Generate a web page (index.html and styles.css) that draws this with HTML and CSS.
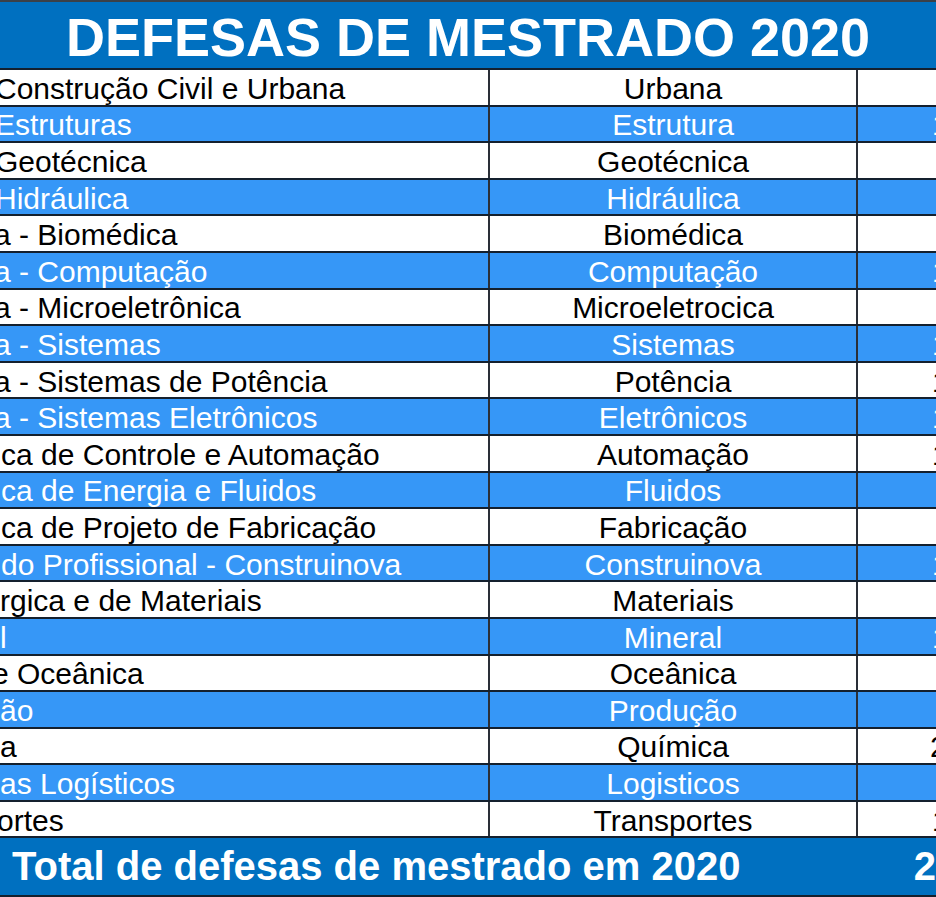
FILE: index.html
```html
<!DOCTYPE html>
<html lang="pt">
<head>
<meta charset="utf-8">
<title>Defesas de Mestrado 2020</title>
<link rel="stylesheet" href="styles.css">
</head>
<body>
<div class="sheet">
  <header class="title-bar"><h1>DEFESAS DE MESTRADO 2020</h1></header>
  <div class="rows">
    <div class="row"><div class="c1 civ">Construção Civil e Urbana</div><div class="c2">Urbana</div><div class="c3"></div></div>
    <div class="row alt"><div class="c1 civ">Estruturas</div><div class="c2">Estrutura</div><div class="c3"><span>1</span></div></div>
    <div class="row"><div class="c1 civ">Geotécnica</div><div class="c2">Geotécnica</div><div class="c3"></div></div>
    <div class="row alt"><div class="c1 civ">Hidráulica</div><div class="c2">Hidráulica</div><div class="c3"></div></div>
    <div class="row"><div class="c1 ele">a - Biomédica</div><div class="c2">Biomédica</div><div class="c3"></div></div>
    <div class="row alt"><div class="c1 ele">a - Computação</div><div class="c2">Computação</div><div class="c3"><span>1</span></div></div>
    <div class="row"><div class="c1 ele">a - Microeletrônica</div><div class="c2">Microeletrocica</div><div class="c3"></div></div>
    <div class="row alt"><div class="c1 ele">a - Sistemas</div><div class="c2">Sistemas</div><div class="c3"><span>1</span></div></div>
    <div class="row"><div class="c1 ele">a - Sistemas de Potência</div><div class="c2">Potência</div><div class="c3"><span>1</span></div></div>
    <div class="row alt"><div class="c1 ele">a - Sistemas Eletrônicos</div><div class="c2">Eletrônicos</div><div class="c3"><span>1</span></div></div>
    <div class="row"><div class="c1 mec">ca de Controle e Automação</div><div class="c2">Automação</div><div class="c3"><span>1</span></div></div>
    <div class="row alt"><div class="c1 mec">ca de Energia e Fluidos</div><div class="c2">Fluidos</div><div class="c3"></div></div>
    <div class="row"><div class="c1 mec">ca de Projeto de Fabricação</div><div class="c2">Fabricação</div><div class="c3"></div></div>
    <div class="row alt"><div class="c1 pro">do Profissional - Construinova</div><div class="c2">Construinova</div><div class="c3"><span>1</span></div></div>
    <div class="row"><div class="c1">rgica e de Materiais</div><div class="c2">Materiais</div><div class="c3"></div></div>
    <div class="row alt"><div class="c1">l</div><div class="c2">Mineral</div><div class="c3"><span>1</span></div></div>
    <div class="row"><div class="c1 oce">e Oceânica</div><div class="c2">Oceânica</div><div class="c3"></div></div>
    <div class="row alt"><div class="c1">ão</div><div class="c2">Produção</div><div class="c3"></div></div>
    <div class="row"><div class="c1">a</div><div class="c2">Química</div><div class="c3"><span class="two">2</span></div></div>
    <div class="row alt"><div class="c1">as Logísticos</div><div class="c2">Logisticos</div><div class="c3"></div></div>
    <div class="row"><div class="c1 ort">ortes</div><div class="c2">Transportes</div><div class="c3"><span>1</span></div></div>
  </div>
  <footer class="total-bar">
    <div class="total-label">Total de defesas de mestrado em 2020</div>
    <div class="total-value">2</div>
  </footer>
</div>
</body>
</html>
```

FILE: styles.css
```css
html, body {
  margin: 0;
  padding: 0;
  overflow: hidden;
  background: #ffffff;
}

.sheet {
  width: 936px;
  height: 897px;
  overflow: hidden;
  font-family: "Liberation Sans", Arial, sans-serif;
  display: flex;
  flex-direction: column;
}

.title-bar {
  height: 70px;
  box-sizing: border-box;
  background: #0070c0;
  border-top: 2px solid #3b4048;
  border-bottom: 2px solid #14202e;
  display: flex;
  align-items: center;
  justify-content: center;
}

.title-bar h1 {
  margin: 0;
  color: #ffffff;
  font-size: 54px;
  font-weight: bold;
  line-height: 1;
  padding-top: 4px;
}

.rows {
  display: grid;
  grid-template-rows: repeat(21, 36.6px);
}

.row {
  display: grid;
  grid-template-columns: 490px 368px 1fr;
  box-sizing: border-box;
  border-bottom: 2px solid #14202e;
  background: #ffffff;
  color: #000000;
  font-size: 30px;
}

.row.alt {
  background: #3697f7;
  color: #ffffff;
}

.row > div {
  display: flex;
  align-items: center;
  white-space: nowrap;
  overflow: hidden;
  line-height: 1;
  padding-top: 3px;
}

.c1 {
  border-right: 2px solid #2a2f38;
}

.c1.civ {
  text-indent: -5px;
}

.c1.oce {
  text-indent: -8px;
}

.c1.ele {
  text-indent: -6px;
}

.c1.mec {
  text-indent: 1px;
}

.c1.pro {
  text-indent: 1px;
}

.c1.ort {
  text-indent: -3px;
}

.c2 {
  justify-content: center;
  border-right: 2px solid #2a2f38;
}

.c3 {
  padding-left: 74px;
}

.c3 .two {
  margin-left: -2px;
}

.total-bar {
  flex: 1;
  box-sizing: border-box;
  background: #0070c0;
  border-bottom: 2px solid #14202e;
  color: #ffffff;
  font-weight: bold;
  font-size: 40px;
  display: flex;
  align-items: center;
  white-space: nowrap;
}

.total-label {
  padding-left: 12px;
  width: 920px;
  box-sizing: border-box;
}
```
